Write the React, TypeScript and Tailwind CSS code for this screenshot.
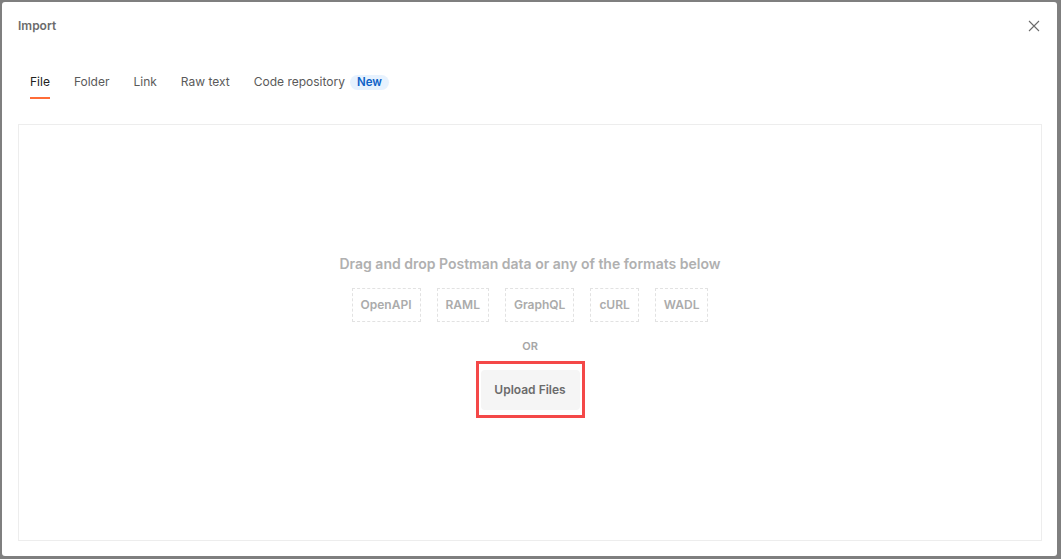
import { useState } from "react";

const tabs = ["File", "Folder", "Link", "Raw text", "Code repository"];
const formats = ["OpenAPI", "RAML", "GraphQL", "cURL", "WADL"];

function CloseIcon() {
  return (
    <svg width="12" height="12" viewBox="0 0 12 12" aria-hidden>
      <path d="M1 1L11 11M11 1L1 11" stroke="#6b6b6b" strokeWidth="1.1" fill="none" />
    </svg>
  );
}

export default function App() {
  const [active, setActive] = useState("File");

  return (
    <div
      className="h-[559px] w-[1061px] bg-[#7f7f7f] pt-[2px] pl-[2px] pr-[4px] pb-[3px]"
      style={{ fontFamily: "Inter, 'Noto Sans', sans-serif" }}
    >
      <div className="flex h-full flex-col rounded-[3px] bg-white pl-4 pr-[15px] pb-[15px]">
        <div className="flex items-center justify-between pt-4">
          <h1 className="text-[12px] leading-4 font-semibold text-[#6b6b6b]">Import</h1>
          <button className="flex h-4 w-4 items-center justify-center">
            <CloseIcon />
          </button>
        </div>

        <div className="mt-10 flex gap-6 pl-3">
          {tabs.map((t) => (
            <button key={t} onClick={() => setActive(t)} className="flex flex-col items-start">
              <span
                className={`flex items-center text-[12px] leading-4 ${
                  active === t ? "text-[#212121]" : "text-[#5a5a5a]"
                }`}
              >
                {t}
                {t === "Code repository" && (
                  <span className="ml-[5px] rounded-full bg-[#e7f2fe] px-[7px] text-[11.5px] leading-[15px] font-semibold text-[#0b61c7]">
                    New
                  </span>
                )}
              </span>
              <span
                className={`mt-[7px] h-[2px] w-full ${active === t ? "bg-[#ff6c37]" : "bg-transparent"}`}
              />
            </button>
          ))}
        </div>

        <div className="mt-[25px] flex flex-1 flex-col items-center justify-center border border-[#ededed] pt-[7px]">
          <p className="text-[14px] leading-5 font-semibold text-[#b0b0b0]">
            Drag and drop Postman data or any of the formats below
          </p>
          <div className="mt-[14px] flex gap-4">
            {formats.map((f) => (
              <span
                key={f}
                className="flex h-[34px] items-center border border-dashed border-[#e2e2e2] px-2 text-[12px] font-semibold text-[#ababab]"
              >
                {f}
              </span>
            ))}
          </div>
          <p className="mt-4 text-[11px] leading-4 font-semibold text-[#a6a6a6]">OR</p>
          <div className="mt-[7px] border-[3px] border-[#f44848] px-[2px] pt-[6px] pb-[5px]">
            <button className="h-[40px] w-[99px] rounded-[4px] bg-[#f5f5f5] text-[12px] font-semibold text-[#6b6b6b]">
              Upload Files
            </button>
          </div>
        </div>
      </div>
    </div>
  );
}
